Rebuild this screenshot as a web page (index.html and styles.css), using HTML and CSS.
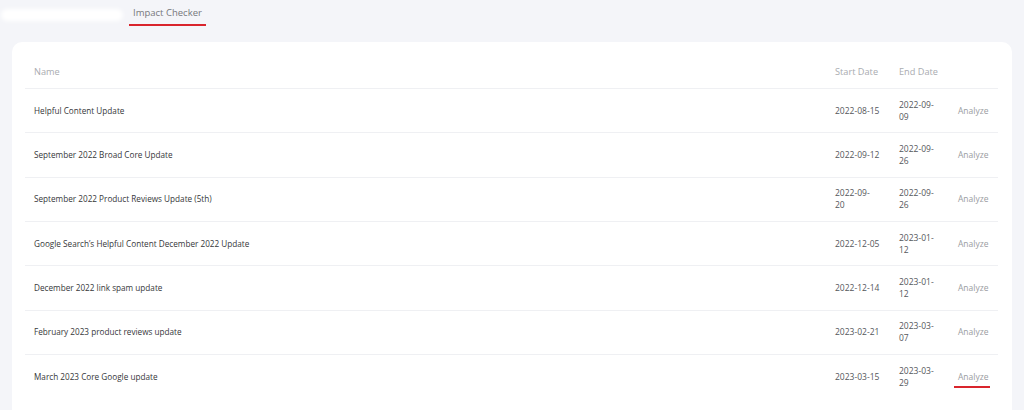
FILE: index.html
```html
<!DOCTYPE html>
<html lang="en">
<head>
<meta charset="utf-8">
<title>Impact Checker</title>
<link rel="stylesheet" href="styles.css">
</head>
<body>
<div class="topbar">
  <div class="blob"></div>
  <div class="crumb">Impact Checker</div>
</div>
<div class="card">
  <table class="updates">
    <colgroup>
      <col>
      <col class="c-start">
      <col class="c-end">
      <col class="c-act">
    </colgroup>
    <thead>
      <tr><th>Name</th><th>Start Date</th><th>End Date</th><th></th></tr>
    </thead>
    <tbody>
      <tr><td class="name">Helpful Content Update</td><td class="date">2022-08-15</td><td class="date">2022-09-<br>09</td><td class="act"><span class="link">Analyze</span></td></tr>
      <tr><td class="name">September 2022 Broad Core Update</td><td class="date">2022-09-12</td><td class="date">2022-09-<br>26</td><td class="act"><span class="link">Analyze</span></td></tr>
      <tr><td class="name">September 2022 Product Reviews Update (5th)</td><td class="date">2022-09-<br>20</td><td class="date">2022-09-<br>26</td><td class="act"><span class="link">Analyze</span></td></tr>
      <tr><td class="name">Google Search’s Helpful Content December 2022 Update</td><td class="date">2022-12-05</td><td class="date">2023-01-<br>12</td><td class="act"><span class="link">Analyze</span></td></tr>
      <tr><td class="name">December 2022 link spam update</td><td class="date">2022-12-14</td><td class="date">2023-01-<br>12</td><td class="act"><span class="link">Analyze</span></td></tr>
      <tr><td class="name">February 2023 product reviews update</td><td class="date">2023-02-21</td><td class="date">2023-03-<br>07</td><td class="act"><span class="link">Analyze</span></td></tr>
      <tr><td class="name">March 2023 Core Google update</td><td class="date">2023-03-15</td><td class="date">2023-03-<br>29</td><td class="act"><span class="link marked">Analyze</span></td></tr>
    </tbody>
  </table>
</div>
</body>
</html>
```
FILE: styles.css
```css
html, body {
  margin: 0;
  padding: 0;
  background: #f4f5f9;
  font-family: "Open Sans", "Liberation Sans", sans-serif;
  overflow: hidden;
}

.topbar {
  display: flex;
  align-items: flex-start;
  height: 42px;
}

.blob {
  width: 122px;
  height: 12px;
  margin-top: 9px;
  margin-left: 1px;
  background: #ffffff;
  border-radius: 7px;
  filter: blur(2px);
}

.crumb {
  margin-left: 6px;
  padding: 6px 4px 5px;
  line-height: 13px;
  font-size: 9.5px;
  color: #77787c;
  border-bottom: 2px solid #d9252d;
}

.card {
  margin: 0 12px;
  background: #ffffff;
  border-radius: 10px 10px 0 0;
  padding: 12px 14px 20px 13px;
}

.updates {
  width: 100%;
  border-collapse: collapse;
  table-layout: fixed;
  font-size: 8.5px;
}

.c-start { width: 64px; }
.c-end { width: 59px; }
.c-act { width: 49px; }

.updates th {
  height: 34px;
  padding: 0 9px;
  text-align: left;
  font-weight: 400;
  font-size: 9.2px;
  color: #a9abb0;
  border-bottom: 1px solid #eff0f3;
}

.updates td {
  height: 43.33px;
  padding: 0 9px;
  line-height: 12px;
  border-bottom: 1px solid #eff0f3;
  vertical-align: middle;
}

.updates tbody tr:last-child td {
  border-bottom: none;
}

.updates td.name {
  font-size: 8.2px;
  color: #36373a;
}
.date { color: #55575b; }
.act { color: #9a9ca1; }

.link.marked {
  position: relative;
}

.link.marked::after {
  content: "";
  position: absolute;
  left: -4px;
  right: -2px;
  bottom: -6px;
  height: 2px;
  background: #d9252d;
}
```
